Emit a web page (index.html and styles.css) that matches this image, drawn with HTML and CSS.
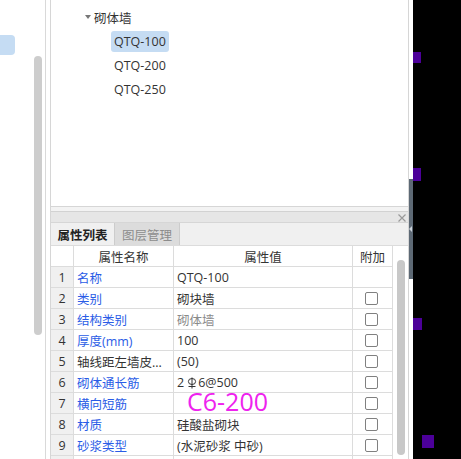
FILE: index.html
```html
<!DOCTYPE html>
<html>
<head>
<meta charset="utf-8">
<link rel="stylesheet" href="styles.css">
</head>
<body>
<div class="app">
  <div class="left">
    <div class="lsel"></div>
    <div class="lscroll"></div>
  </div>
  <div class="vline"></div>
  <div class="main">
    <div class="tree">
      <div class="trow head"><span class="caret"></span><span>砌体墙</span></div>
      <div class="trow item"><span class="lbl sel">QTQ-100</span></div>
      <div class="trow item"><span class="lbl">QTQ-200</span></div>
      <div class="trow item"><span class="lbl">QTQ-250</span></div>
    </div>
    <div class="sep"></div>
    <div class="phead">
      <svg class="close" width="8" height="8" viewBox="0 0 8 8"><path d="M0.5 0.5L7.5 7.5M7.5 0.5L0.5 7.5" stroke="#9a9a9a" stroke-width="1.2" fill="none"/></svg>
    </div>
    <div class="tabs">
      <div class="tab active">属性列表</div>
      <div class="tab">图层管理</div>
    </div>
    <div class="tablewrap">
      <div class="grid">
        <div class="c num hd"></div><div class="c hd ctr">属性名称</div><div class="c hd ctr">属性值</div><div class="c hd ctr">附加</div>

        <div class="c num">1</div><div class="c name">名称</div><div class="c val">QTQ-100</div><div class="c chk"></div>
        <div class="c num">2</div><div class="c name">类别</div><div class="c val">砌块墙</div><div class="c chk"><span class="box"></span></div>
        <div class="c num">3</div><div class="c name">结构类别</div><div class="c val grey">砌体墙</div><div class="c chk"><span class="box"></span></div>
        <div class="c num">4</div><div class="c name">厚度(mm)</div><div class="c val">100</div><div class="c chk"><span class="box"></span></div>
        <div class="c num">5</div><div class="c name dark">轴线距左墙皮...</div><div class="c val">(50)</div><div class="c chk"><span class="box"></span></div>
        <div class="c num">6</div><div class="c name">砌体通长筋</div><div class="c val">2<svg class="rebar" width="10" height="13" viewBox="0 0 10 13"><ellipse cx="5" cy="5.5" rx="3.6" ry="3" fill="none" stroke="#333" stroke-width="1"/><path d="M5 1.5V12.5M1.5 10.5H8.5" stroke="#333" stroke-width="1" fill="none"/></svg>6@500</div><div class="c chk"><span class="box"></span></div>
        <div class="c num">7</div><div class="c name">横向短筋</div><div class="c val rel"><span class="note">C6-200</span></div><div class="c chk"><span class="box"></span></div>
        <div class="c num">8</div><div class="c name">材质</div><div class="c val">硅酸盐砌块</div><div class="c chk"><span class="box"></span></div>
        <div class="c num">9</div><div class="c name">砂浆类型</div><div class="c val">(水泥砂浆 中砂)</div><div class="c chk"><span class="box"></span></div>
        <div class="c num"></div><div class="c name"></div><div class="c val"></div><div class="c chk"></div>
      </div>
      <div class="rscroll"><div class="thumb"></div></div>
    </div>
  </div>
  <div class="strip">
    <div class="strip-top"></div>
    <div class="strip-mid"><span class="arrow"></span></div>
  </div>
  <div class="black">
    <span class="px p1"></span>
    <span class="px p2"></span>
    <span class="px p3"></span>
    <span class="px p4"></span>
  </div>
</div>
</body>
</html>
```

FILE: styles.css
```css
html, body {
  margin: 0;
  padding: 0;
  background: #ffffff;
}
body {
  font-family: "Open Sans", "Noto Sans CJK SC", sans-serif;
  font-size: 12.5px;
  color: #333333;
}
.app {
  display: flex;
  width: 461px;
  height: 459px;
  overflow: hidden;
}
.left {
  width: 45px;
  flex: none;
  display: flex;
  flex-direction: column;
}
.lsel {
  width: 15px;
  height: 20px;
  margin-top: 35px;
  background: #c5dcf3;
  border-radius: 0 4px 4px 0;
}
.lscroll {
  width: 8px;
  height: 279px;
  margin-top: 1px;
  margin-left: 34px;
  background: #cdcdcd;
  border-radius: 4px;
}
.vline {
  width: 4px;
  flex: none;
  border-left: 1px solid #d9d9d9;
}
.main {
  width: 357px;
  flex: none;
  border-left: 1px solid #d6d6d6;
  border-right: 1px solid #d6d6d6;
  display: flex;
  flex-direction: column;
}
.tree {
  height: 201px;
  padding-top: 5px;
  border-bottom: 1px solid #d6d6d6;
  flex: none;
}
.trow {
  height: 24px;
  display: flex;
  align-items: center;
}
.head {
  padding-left: 34px;
}
.caret {
  width: 0;
  height: 0;
  border-left: 3px solid transparent;
  border-right: 3px solid transparent;
  border-top: 4px solid #777777;
  margin-right: 3px;
}
.item {
  padding-left: 60px;
}
.lbl {
  height: 21px;
  line-height: 21px;
  padding: 0 3px;
  border-radius: 3px;
}
.lbl.sel {
  background: #c5dcf3;
}
.sep {
  height: 4px;
  background: #f3f3f3;
  flex: none;
}
.phead {
  height: 10px;
  background: #e6e6e6;
  border-top: 1px solid #d2d2d2;
  border-bottom: 1px solid #d6d6d6;
  display: flex;
  justify-content: flex-end;
  align-items: center;
  flex: none;
}
.close {
  margin-right: 2px;
  margin-top: 1px;
}
.tabs {
  height: 22px;
  background: #f0f0f0;
  display: flex;
  flex: none;
}
.tab {
  width: 63px;
  border-right: 1px solid #cccccc;
  background: #dcdcdc;
  color: #8c8c8c;
  display: flex;
  align-items: center;
  justify-content: center;
}
.tab.active {
  background: #f0f0f0;
  color: #222222;
  font-weight: bold;
}
.tab + .tab {
  width: 64px;
}
.tablewrap {
  display: flex;
  border-top: 1px solid #dcdcdc;
  flex: 1;
  min-height: 0;
}
.grid {
  display: grid;
  grid-template-columns: 23px 100px 179px 40px;
  grid-auto-rows: 21px;
  width: 342px;
  flex: none;
}
.c {
  box-sizing: border-box;
  border-right: 1px solid #dcdcdc;
  border-bottom: 1px solid #dcdcdc;
  display: flex;
  align-items: center;
  white-space: nowrap;
  overflow: hidden;
}
.num {
  background: #f0f0f0;
  justify-content: center;
}
.num.hd {
  background: #ffffff;
}
.ctr {
  justify-content: center;
}
.name {
  color: #2a5ce6;
  padding-left: 3px;
}
.name.dark {
  color: #333333;
}
.val {
  padding-left: 3px;
}
.val.grey {
  color: #8a8a8a;
}
.rel {
  position: relative;
  overflow: visible;
}
.note {
  position: absolute;
  left: 13px;
  top: -1px;
  font-family: "Open Sans", sans-serif;
  font-size: 25px;
  line-height: 18px;
  color: #ee22ee;
}
.rebar {
  margin: 0 1px 0 3px;
}
.chk {
  justify-content: center;
  padding-right: 2px;
}
.box {
  width: 11px;
  height: 11px;
  border: 1px solid #808080;
  border-radius: 2px;
  background: #ffffff;
}
.rscroll {
  flex: 1;
  padding-left: 4px;
  padding-top: 14px;
}
.thumb {
  width: 8px;
  height: 195px;
  background: #c8c8c8;
  border-radius: 4px;
}
.strip {
  width: 4px;
  flex: none;
  display: flex;
  flex-direction: column;
}
.strip-top {
  height: 179px;
}
.strip-mid {
  height: 100px;
  background: #5d6975;
  display: flex;
  align-items: center;
}
.arrow {
  width: 0;
  height: 0;
  border-top: 3px solid transparent;
  border-bottom: 3px solid transparent;
  border-right: 3px solid #c9d0d8;
  margin-top: -1px;
}
.black {
  flex: 1;
  background: #000000;
  position: relative;
}
.px {
  position: absolute;
  background: #4c0099;
}
.p1 { left: 0; top: 52px; width: 8px; height: 11px; }
.p2 { left: 0; top: 168px; width: 8px; height: 13px; }
.p3 { left: 0; top: 318px; width: 9px; height: 12px; }
.p4 { left: 9px; top: 435px; width: 12px; height: 13px; }
```
